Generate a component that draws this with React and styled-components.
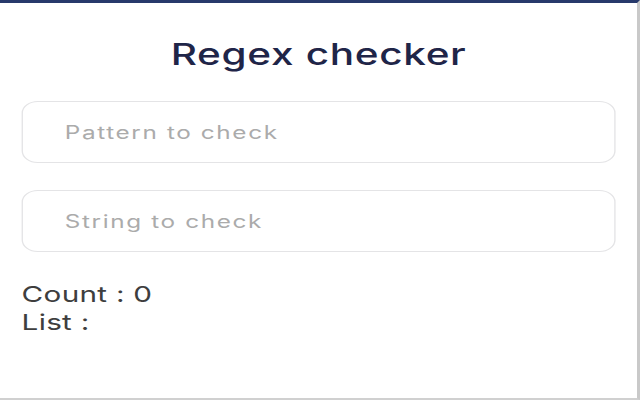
import React, { useState } from "react";
import styled, { createGlobalStyle } from "styled-components";

const GlobalStyle = createGlobalStyle`
  html, body {
    margin: 0;
    padding: 0;
    background: #ffffff;
  }
  body {
    font-family: Inter, "Noto Sans", sans-serif;
  }
`;

const Window = styled.div`
  width: 640px;
  height: 400px;
  box-sizing: border-box;
  border-top: 3px solid #27396b;
  border-right: 3px solid #c9c9c9;
  border-bottom: 2px solid #d0d0d0;
  background: #fff;
  overflow: hidden;
`;

const Stage = styled.div`
  width: 472px;
  box-sizing: border-box;
  padding: 0 16px;
  display: flex;
  flex-direction: column;
  transform: scaleX(1.35);
  transform-origin: 0 0;
`;

const Title = styled.h1`
  margin: 33px 0 0;
  text-align: center;
  font-size: 30px;
  font-weight: 500;
  letter-spacing: 0.5px;
  color: #1f2548;
`;

const Form = styled.div`
  margin-top: 29px;
  display: flex;
  flex-direction: column;
  gap: 27px;
`;

const Field = styled.input`
  width: 100%;
  height: 62px;
  box-sizing: border-box;
  border: 1px solid #e4e4e6;
  border-radius: 12px;
  padding: 0 31px;
  font-family: inherit;
  font-size: 18px;
  letter-spacing: 1.2px;
  color: #333;
  outline: none;

  &::placeholder {
    color: #ababab;
  }
`;

const Results = styled.div`
  margin-top: 28px;
  font-size: 22px;
  letter-spacing: 0.2px;
  line-height: 28px;
  color: #3e3e3e;
`;

export default function App() {
  const [pattern, setPattern] = useState("");
  const [text, setText] = useState("");

  let matches = [];
  try {
    if (pattern && text) matches = text.match(new RegExp(pattern, "g")) || [];
  } catch (e) {
    matches = [];
  }

  return (
    <>
      <GlobalStyle />
      <Window>
        <Stage>
          <Title>Regex checker</Title>
          <Form>
            <Field
              placeholder="Pattern to check"
              value={pattern}
              onChange={(e) => setPattern(e.target.value)}
            />
            <Field
              placeholder="String to check"
              value={text}
              onChange={(e) => setText(e.target.value)}
            />
          </Form>
          <Results>
            <div>Count : {matches.length}</div>
            <div>List : {matches.join(", ")}</div>
          </Results>
        </Stage>
      </Window>
    </>
  );
}
